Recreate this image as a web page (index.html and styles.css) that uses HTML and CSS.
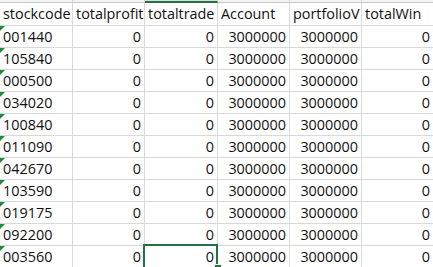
FILE: index.html
```html
<!DOCTYPE html>
<html>
<head>
<meta charset="utf-8">
<link rel="stylesheet" href="styles.css">
</head>
<body>
<div class="sheet">
  <div class="colhead"></div><div class="colhead"></div><div class="colhead sel"></div><div class="colhead"></div><div class="colhead"></div><div class="colhead"></div>

  <div class="cell">stockcode</div><div class="cell">totalprofit</div><div class="cell">totaltrade</div><div class="cell">Account</div><div class="cell">portfolioV</div><div class="cell">totalWin</div>

  <div class="cell txt">001440</div><div class="cell num">0</div><div class="cell num">0</div><div class="cell num">3000000</div><div class="cell num">3000000</div><div class="cell num">0</div>
  <div class="cell txt">105840</div><div class="cell num">0</div><div class="cell num">0</div><div class="cell num">3000000</div><div class="cell num">3000000</div><div class="cell num">0</div>
  <div class="cell txt">000500</div><div class="cell num">0</div><div class="cell num">0</div><div class="cell num">3000000</div><div class="cell num">3000000</div><div class="cell num">0</div>
  <div class="cell txt">034020</div><div class="cell num">0</div><div class="cell num">0</div><div class="cell num">3000000</div><div class="cell num">3000000</div><div class="cell num">0</div>
  <div class="cell txt">100840</div><div class="cell num">0</div><div class="cell num">0</div><div class="cell num">3000000</div><div class="cell num">3000000</div><div class="cell num">0</div>
  <div class="cell txt">011090</div><div class="cell num">0</div><div class="cell num">0</div><div class="cell num">3000000</div><div class="cell num">3000000</div><div class="cell num">0</div>
  <div class="cell txt">042670</div><div class="cell num">0</div><div class="cell num">0</div><div class="cell num">3000000</div><div class="cell num">3000000</div><div class="cell num">0</div>
  <div class="cell txt">103590</div><div class="cell num">0</div><div class="cell num">0</div><div class="cell num">3000000</div><div class="cell num">3000000</div><div class="cell num">0</div>
  <div class="cell txt">019175</div><div class="cell num">0</div><div class="cell num">0</div><div class="cell num">3000000</div><div class="cell num">3000000</div><div class="cell num">0</div>
  <div class="cell txt">092200</div><div class="cell num">0</div><div class="cell num">0</div><div class="cell num">3000000</div><div class="cell num">3000000</div><div class="cell num">0</div>
  <div class="cell txt">003560</div><div class="cell num">0</div><div class="cell num active">0<span class="handle"></span></div><div class="cell num">3000000</div><div class="cell num">3000000</div><div class="cell num">0</div>
</div>
</body>
</html>
```

FILE: styles.css
```css
html, body {
  margin: 0;
  padding: 0;
  background: #ffffff;
  overflow: hidden;
}

.sheet {
  display: grid;
  grid-template-columns: 73px 72px 73px 72px 72px 72px;
  grid-template-rows: 3px 23px repeat(11, 22px);
  width: 434px;
  font-family: "Open Sans", "Noto Sans", sans-serif;
  font-size: 14.4px;
  color: #111;
}

.colhead {
  box-sizing: border-box;
  background: #f3f3f3;
  border-right: 1px solid #d0d0d0;
  border-bottom: 1px solid #c8c8c8;
}

.colhead.sel {
  background: #dcdcdc;
  border-bottom: 2px solid #217346;
}

.cell {
  box-sizing: border-box;
  position: relative;
  border-right: 1px solid #d9d9d9;
  border-bottom: 1px solid #d9d9d9;
  padding: 0 1px 0 3px;
  line-height: 21px;
  white-space: nowrap;
  overflow: hidden;
}

.num {
  text-align: right;
  padding-right: 3px;
}

.txt::before {
  content: "";
  position: absolute;
  left: 0;
  top: 0;
  border-top: 5px solid #1e8a3a;
  border-right: 5px solid transparent;
}

.active {
  overflow: visible;
}

.active::after {
  content: "";
  position: absolute;
  left: -2px;
  top: -2px;
  width: 75px;
  height: 30px;
  box-sizing: border-box;
  border: 2px solid #217346;
}

.handle {
  position: absolute;
  left: 69px;
  top: 18px;
  width: 6px;
  height: 6px;
  background: #217346;
  border: 1px solid #ffffff;
  z-index: 2;
}
```
